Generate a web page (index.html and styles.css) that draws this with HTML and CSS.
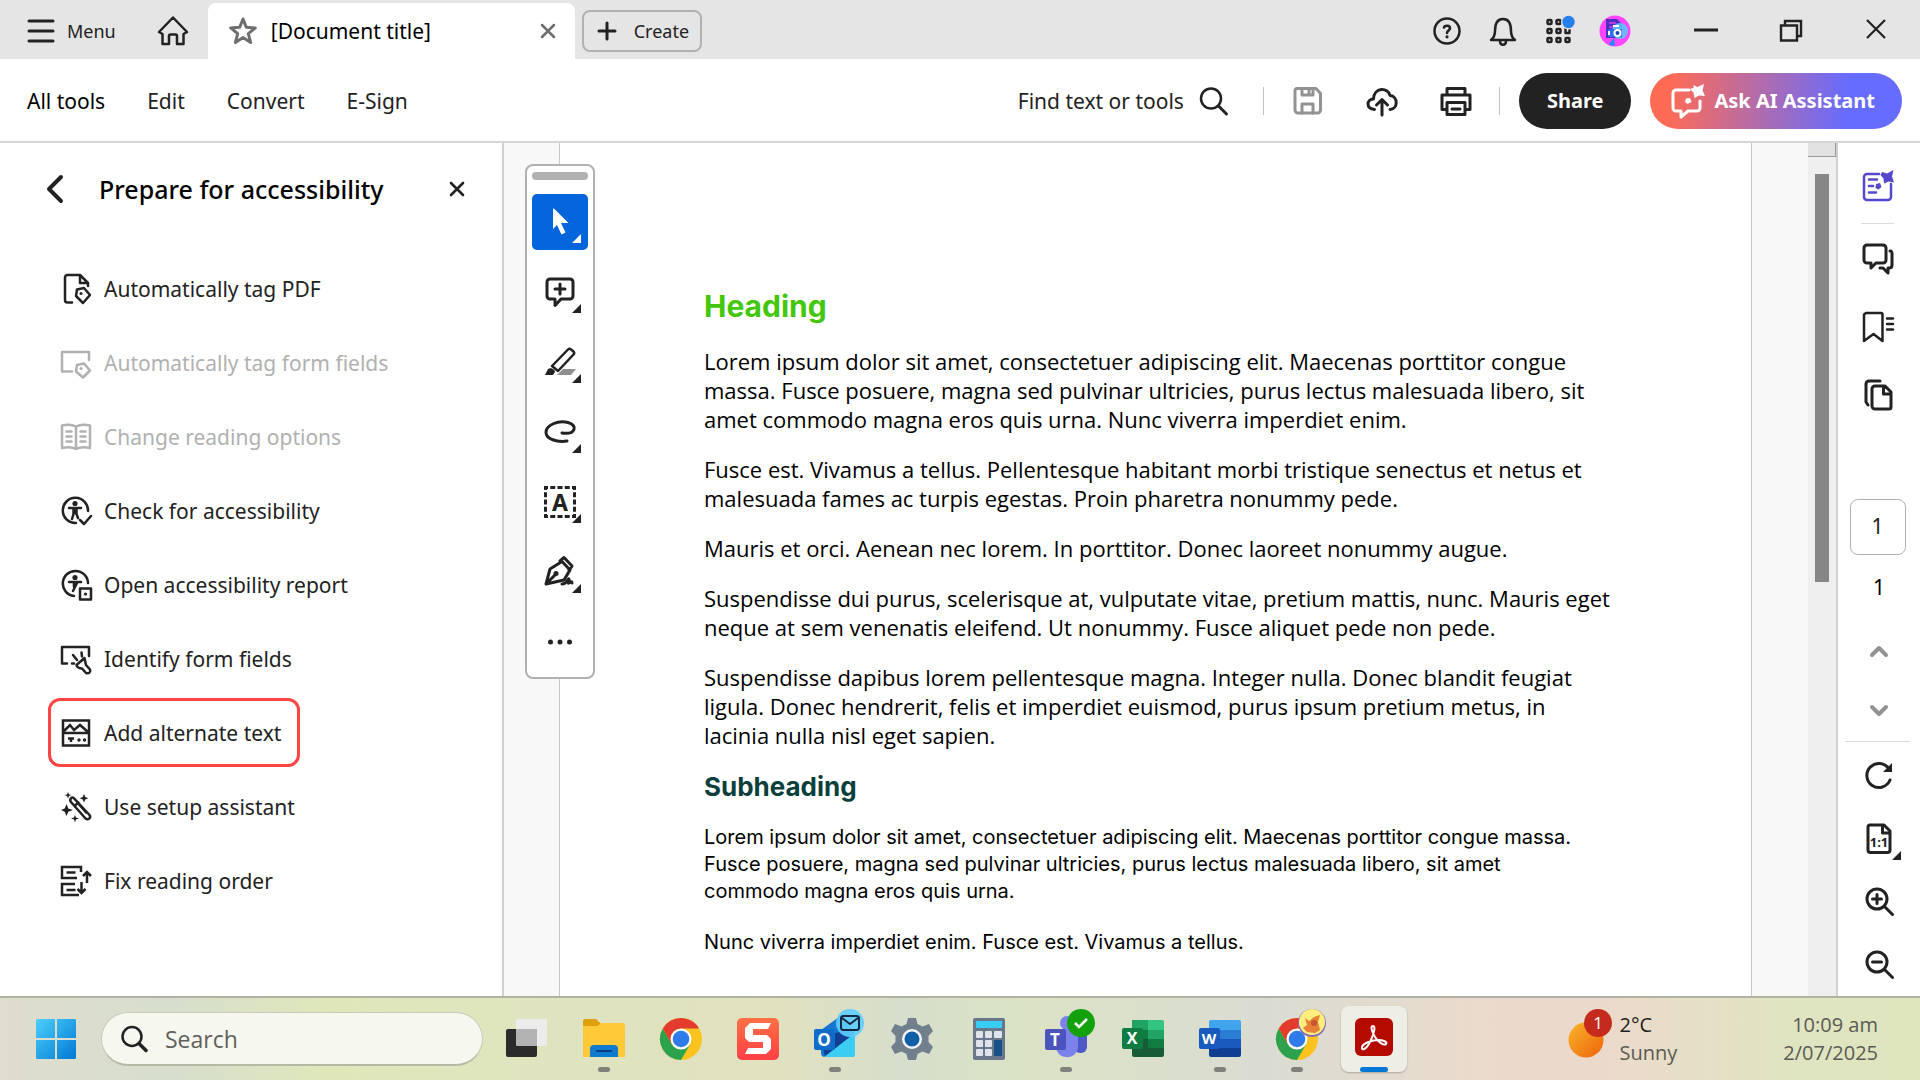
FILE: index.html
```html
<!DOCTYPE html>
<html lang="en">
<head>
<meta charset="utf-8">
<title>[Document title]</title>
<link rel="stylesheet" href="styles.css">
</head>
<body>
<header class="titlebar">
  <button class="menu-btn" type="button">
    <svg class="ic" width="26" height="26" viewBox="0 0 26 26"><path d="M1 3h24M1 13h24M1 23h24" stroke-width="3"/></svg>
    Menu
  </button>
  <button class="home-btn" type="button" aria-label="Home">
    <svg class="ic" width="32" height="32" viewBox="0 0 32 32"><path d="M16 2.500 30 17l-3.500 2V29H20V21a1.500 1.500 0 0 0-1.500-1.500h-5A1.500 1.500 0 0 0 12 21v8H5.500V19L2 17z"/></svg>
  </button>
  <div class="tab">
    <svg class="ic grey" width="30" height="30" viewBox="0 0 30 30"><path d="M15 3l3.300 8.300 9 .6-7 5.700 2.300 8.900L15 21.600l-7.600 4.900 2.300-8.900-7-5.700 9-.6z" stroke-width="3"/></svg>
    <span class="tab-title">[Document title]</span>
    <button type="button" aria-label="Close tab"><svg class="ic grey" width="16" height="16" viewBox="0 0 16 16"><path d="M2 2l12 12M14 2L2 14" stroke-width="2.500"/></svg></button>
  </div>
  <button class="create-btn" type="button">
    <svg class="ic" width="20" height="20" viewBox="0 0 20 20"><path d="M10 2v16M2 10h16" stroke-width="3"/></svg>
    Create
  </button>
  <div class="title-actions">
    <button type="button" aria-label="Help"><svg class="ic" width="32" height="32" viewBox="0 0 32 32"><circle cx="16" cy="16" r="12.500"/><path d="M13 12.500c.6-2.300 6-2.500 6 .8 0 2-3 2.300-3 4.700" stroke-width="2.600"/><circle class="dot" cx="16" cy="21.800" r="1.600"/></svg></button>
    <button type="button" aria-label="Notifications"><svg class="ic" width="32" height="32" viewBox="0 0 32 32"><path d="M4 25c2.500-2 4-5 4-9 0-7 1.500-12 8-12s8 5 8 12c0 4 1.500 7 4 9z"/><path d="M13 26c0 5 6 5 6 0"/></svg></button>
    <button type="button" aria-label="Apps"><svg class="ic" width="32" height="32" viewBox="0 0 32 32"><g><rect x="4.500" y="5" width="4" height="4" rx="1"/><rect x="13.500" y="5" width="4" height="4" rx="1"/><rect x="4.500" y="14" width="4" height="4" rx="1"/><rect x="13.500" y="14" width="4" height="4" rx="1"/><path d="M22.500 14v4h4v-3"/><rect x="4.500" y="23" width="4" height="4" rx="1"/><rect x="13.500" y="23" width="4" height="4" rx="1"/><rect x="22.500" y="23" width="4" height="4" rx="1"/></g><circle cx="25.500" cy="7" r="7.500" fill="#e5e5e5" stroke="none"/><circle cx="25.500" cy="7" r="6.200" fill="#2680eb" stroke="none"/></svg></button>
    <button type="button" aria-label="Account"><svg width="32" height="32" viewBox="0 0 32 32"><circle cx="16" cy="16" r="15.500" fill="#ff45ff"/><path d="M7 4h11l5 5v14H7z" fill="#4b2fbf"/><path d="M10 8h7M10 12h9M10 16h4" stroke="#e03df0" stroke-width="1.500"/><circle cx="21" cy="16" r="8" fill="#5cc3ff" opacity=".9"/><rect x="9" y="14" width="14" height="8" rx="1" fill="#2f6ff0"/><path d="M10 16v4M14 11h6" stroke="#fff" stroke-width="2"/><circle cx="18.500" cy="18" r="3" fill="#1c45c0" stroke="#fff" stroke-width="2"/><path d="M15 23l-5 6c2 2 4 2 6 1z" fill="#2188ff"/></svg></button>
  </div>
  <div class="window-actions">
    <button type="button" aria-label="Minimise"><svg class="ic sq" width="26" height="26" viewBox="0 0 26 26"><path d="M1 12h24" stroke-width="3"/></svg></button>
    <button type="button" aria-label="Restore"><svg class="ic sq" width="26" height="26" viewBox="0 0 26 26"><path d="M3 7.500h16v15H3z" stroke-width="2.400"/><path d="M7 7V3h16v15h-4" stroke-width="2.400"/></svg></button>
    <button type="button" aria-label="Close window"><svg class="ic sq" width="26" height="26" viewBox="0 0 26 26"><path d="M4 2l18 18M22 2L4 20" stroke-width="2.200"/></svg></button>
  </div>
</header>

<nav class="toolbar">
  <a class="current" href="#tools">All tools</a>
  <a href="#edit">Edit</a>
  <a href="#convert">Convert</a>
  <a href="#sign">E-Sign</a>
  <div class="toolbar-right">
    <button class="find-btn" type="button">Find text or tools
      <svg class="ic" width="32" height="32" viewBox="0 0 32 32"><circle cx="13" cy="13.500" r="10"/><path d="M20.500 21l8 8" stroke-width="3"/></svg>
    </button>
    <span class="vline"></span>
    <button type="button" aria-label="Save"><svg class="ic pale" width="32" height="32" viewBox="0 0 32 32"><path d="M5 3.500h19l4.500 5V25a3 3 0 0 1-3 3H6a3 3 0 0 1-3-3V5.500a2 2 0 0 1 2-2z" stroke-width="3"/><path d="M10 4v6h11V4M17 4v6M10 28v-9h11v9" stroke-width="3"/></svg></button>
    <button type="button" aria-label="Upload"><svg class="ic" width="32" height="32" viewBox="0 0 32 32"><path d="M8.500 24.500C-.5 24 .5 14 7.500 14 8 2 22 2 24 10.500c8 .5 8.500 13.500 0 14" stroke-width="3"/><path d="M16 30V15M10.500 20l5.500-5.500 5.500 5.500" stroke-width="3"/></svg></button>
    <button type="button" aria-label="Print"><svg class="ic" width="32" height="32" viewBox="0 0 32 32"><path d="M7 10V3.500h18V10M6 24.500H2V10h28v14.500h-4M7 17.500h18v12H7zM12 24h8" stroke-width="3"/></svg></button>
    <span class="vline"></span>
    <button class="share-btn" type="button">Share</button>
    <button class="ai-btn" type="button">
      <svg class="ic white" width="34" height="36" viewBox="0 0 34 36"><path d="M18 7H5a3 3 0 0 0-3 3v15a3 3 0 0 0 3 3h5v6l7-6h9a3 3 0 0 0 3-3v-7" stroke-width="3"/><path class="dot" d="M22 2l4.500 2L33 1l-1.500 6.500 2.500 5.500-6-.5-4.500 2.500-1-5.500L19 6l4-1.500zM15 15.500l4-.5 1.500 4-4 2-2.500-2z"/></svg>
      Ask AI Assistant
    </button>
  </div>
</nav>

<main class="work">
  <aside class="panel">
    <div class="panel-head">
      <button type="button" aria-label="Back"><svg class="ic" width="20" height="32" viewBox="0 0 20 32"><path d="M17 4L5 16l12 12" stroke-width="4"/></svg></button>
      <h1>Prepare for accessibility</h1>
      <button type="button" aria-label="Close panel"><svg class="ic" width="16" height="16" viewBox="0 0 16 16"><path d="M2 2l12 12M14 2L2 14" stroke-width="2.600"/></svg></button>
    </div>
    <ul class="tools">
      <li><button type="button"><svg class="ic" width="32" height="32" viewBox="0 0 32 32"><path d="M12 29.500H7.500a2.500 2.500 0 0 1-2.500-2.500V4.500A2.500 2.500 0 0 1 7.500 2H20l8 8v3M20 2v8h8"/><path d="M17 16.500l7-1.500 6 7-7 8-7-7z"/><circle class="dot" cx="21" cy="20.500" r="1.500"/></svg>Automatically tag PDF</button></li>
      <li><button type="button" disabled><svg class="ic" width="32" height="32" viewBox="0 0 32 32"><path d="M12 24.500H2V5h27v8"/><path d="M17 18l7-1.500 6 7-7 7-7-6z"/><circle class="dot" cx="21" cy="21.500" r="1.500"/></svg>Automatically tag form fields</button></li>
      <li><button type="button" disabled><svg class="ic" width="32" height="32" viewBox="0 0 32 32"><path d="M16 5.500C12 3.500 7 3.500 2 4.500V27c5-1 10-1 14 1 4-2 9-2 14-1V4.500c-5-1-10-1-14 1zM16 5.500V28M6.500 10.500h5M6.500 15.500h5M6.500 20.500h5M20.500 10.500h5M20.500 15.500h5M20.500 20.500h5"/></svg>Change reading options</button></li>
      <li><button type="button"><svg class="ic" width="32" height="32" viewBox="0 0 32 32"><path d="M16 28A12.600 12.600 0 1 1 28 16"/><circle class="dot" cx="15" cy="8.500" r="2.600"/><path d="M9 13h12M15 13v5M13.500 14v5L12 24M16.500 14v5l1.500 4M20 25l4 4 7-8"/></svg>Check for accessibility</button></li>
      <li><button type="button"><svg class="ic" width="32" height="32" viewBox="0 0 32 32"><path d="M14 27A12.600 12.600 0 1 1 28 14"/><circle class="dot" cx="15" cy="8.500" r="2.600"/><path d="M9 13h12M17 14l-4 8M14 14v4"/><path d="M20 19.500h11v11H20z"/><circle class="dot" cx="25.500" cy="25" r="1.600"/></svg>Open accessibility report</button></li>
      <li><button type="button"><svg class="ic" width="32" height="32" viewBox="0 0 32 32"><path d="M7 20.500H2V4h27v9M13 12l4 5M21.500 9.500l.5 4M12 20.500h2"/><path d="M24.500 15L16.500 22c0 2 3 3.500 5.500 3.500l4 4.500c3 1 5-1 4-3.500L26 22z"/></svg>Identify form fields</button></li>
      <li class="picked"><button type="button"><svg class="ic sq" width="32" height="32" viewBox="0 0 32 32"><path d="M3 3.500h26v25H3zM3 16h26M4 14l6-6 4 5 6-5 8 7"/><path d="M8 21.500h6M11 21.500V25"/><circle class="dot" cx="19" cy="23" r="1.700"/><circle class="dot" cx="24.500" cy="23" r="1.700"/></svg>Add alternate text</button></li>
      <li><button type="button"><svg class="ic" width="32" height="32" viewBox="0 0 32 32"><path d="M11 7.200c.8-.8 2-.8 2.800 0L29.500 24c2 3-1.500 5.500-4 3.500L11 11c-.8-1-.8-2.800 0-3.800zM15 14.500l3.500-3"/><path d="M19 14l7 8" stroke-width="1.500"/><path class="dot" d="M8 1l1 2.500 2.500.5L9 5l-1 2.500L7 5l-2.500-1L7 3.500zM24 3l1.300 3 3 1.300-3 1.200-1.300 3-1.300-3-3-1.200 3-1.300zM6.500 13l1.800 4.500L13 19l-4.700 1.700L6.500 25l-1.800-4.300L1 19l3.700-1.500zM15 24l1 2.500 3 1-3 1-1 3-1-3-3-1 3-1z"/></svg>Use setup assistant</button></li>
      <li><button type="button"><svg class="ic sq" width="32" height="32" viewBox="0 0 32 32"><path d="M17 13H2V2h19v5M6.500 7.500h9M15 19H2v11h17M6.500 25h9"/><path d="M27 18V7M23 11l4-4 4 4M21.500 17v11M17.500 24l4 4 4-4"/></svg>Fix reading order</button></li>
    </ul>
  </aside>

  <section class="canvas">
    <article class="page">
      <h2>Heading</h2>
      <p>Lorem ipsum dolor sit amet, consectetuer adipiscing elit. Maecenas porttitor congue<br>massa. Fusce posuere, magna sed pulvinar ultricies, purus lectus malesuada libero, sit<br>amet commodo magna eros quis urna. Nunc viverra imperdiet enim.</p>
      <p>Fusce est. Vivamus a tellus. Pellentesque habitant morbi tristique senectus et netus et<br>malesuada fames ac turpis egestas. Proin pharetra nonummy pede.</p>
      <p>Mauris et orci. Aenean nec lorem. In porttitor. Donec laoreet nonummy augue.</p>
      <p>Suspendisse dui purus, scelerisque at, vulputate vitae, pretium mattis, nunc. Mauris eget<br>neque at sem venenatis eleifend. Ut nonummy. Fusce aliquet pede non pede.</p>
      <p>Suspendisse dapibus lorem pellentesque magna. Integer nulla. Donec blandit feugiat<br>ligula. Donec hendrerit, felis et imperdiet euismod, purus ipsum pretium metus, in<br>lacinia nulla nisl eget sapien.</p>
      <h3>Subheading</h3>
      <p class="alt">Lorem ipsum dolor sit amet, consectetuer adipiscing elit. Maecenas porttitor congue massa.<br>Fusce posuere, magna sed pulvinar ultricies, purus lectus malesuada libero, sit amet<br>commodo magna eros quis urna.</p>
      <p class="alt">Nunc viverra imperdiet enim. Fusce est. Vivamus a tellus.</p>
    </article>
    <div class="scrollbar"><div class="split-box"></div><div class="thumb"></div></div>

    <div class="quick">
      <span class="grip"></span>
      <button class="on more" type="button" aria-label="Select"><svg width="32" height="32" viewBox="0 0 32 32"><path d="M9 3.500c0-1 .8-1.200 1.500-.6L24.500 17H17l4.500 9.500-4 2L13 19l-4 4z" fill="#fff"/></svg></button>
      <button class="more" type="button" aria-label="Comment"><svg class="ic" width="32" height="32" viewBox="0 0 32 32"><path d="M6 3h20a3 3 0 0 1 3 3v14a3 3 0 0 1-3 3H17l-6 6.500V23H6a3 3 0 0 1-3-3V6a3 3 0 0 1 3-3zM16 8v10M11 13h10" stroke-width="3"/></svg></button>
      <button class="more" type="button" aria-label="Highlight"><svg class="ic" width="32" height="32" viewBox="0 0 32 32"><path d="M8 20L24 3.500c1-1 2-1 3 0l2.500 2c1 1 1 2 0 3L14 25z"/><path d="M19 23h13l-5 6H13z" fill="#8f8f8f" stroke="none"/><path class="dot" d="M1 29l3-6c2-2 7 0 7 3l-2 3z"/></svg></button>
      <button class="more" type="button" aria-label="Draw"><svg class="ic" width="32" height="32" viewBox="0 0 32 32"><path d="M18 17c14 2 16-8 6-10.500C14 4 2 9 2 16.500 2 23 13 26.500 23 25" stroke-width="3"/></svg></button>
      <button class="more" type="button" aria-label="Select text box"><svg class="ic sq" width="34" height="34" viewBox="0 0 34 34"><rect x="2.500" y="2.500" width="29" height="29" stroke-width="3" stroke-dasharray="5 2.250" stroke-dashoffset="2.500"/><text x="17" y="25.500" text-anchor="middle" font-family="Noto Sans" font-size="23" font-weight="700" fill="#222" stroke="none">A</text></svg></button>
      <button class="more" type="button" aria-label="Sign"><svg class="ic" width="34" height="34" viewBox="0 0 34 34"><path d="M3 29L7 14l12-7.500L27 15l-6 10zM3 29l9-9" stroke-width="3"/><circle class="dot" cx="13" cy="18.500" r="2.500"/><path d="M17 6l4-3.500 8 8.500-3 4M19 29c5 0 6-6 7-5s-2 5 0 4 3-2 3 0" stroke-width="3"/></svg></button>
      <button type="button" aria-label="More tools"><svg class="ic" width="32" height="32" viewBox="0 0 32 32"><g class="dot"><circle cx="6.500" cy="16" r="2.500"/><circle cx="16" cy="16" r="2.500"/><circle cx="25.500" cy="16" r="2.500"/></g></svg></button>
    </div>
  </section>

  <aside class="rail">
    <button type="button" aria-label="Generative summary"><svg class="ic violet" width="32" height="32" viewBox="0 0 32 32"><path d="M17 4H5a3 3 0 0 0-3 3v20a3 3 0 0 0 3 3h21a3 3 0 0 0 3-3V14M7 9.500h8M7 16h4M7 22.500h7"/><path class="dot" d="M20 2l5 1.500L31.500 0 30 6.500l2 6-5.500-1-4.500 2-.5-5-3-3.500zM14 14l4-1 1.500 4-3 2.500-3-1.500z"/></svg></button>
    <span class="hline"></span>
    <button type="button" aria-label="Comments"><svg class="ic" width="32" height="32" viewBox="0 0 32 32"><path d="M5 2h16a3 3 0 0 1 3 3v12a3 3 0 0 1-3 3h-7l-5 5v-5H5a3 3 0 0 1-3-3V5a3 3 0 0 1 3-3zM28 8c2 0 2 1 2 3v11c0 2-1 3-3 3h-1v5l-5-5h-3" stroke-width="3"/></svg></button>
    <button type="button" aria-label="Bookmarks"><svg class="ic" width="32" height="32" viewBox="0 0 32 32"><path d="M4 2h15a1.500 1.500 0 0 1 1.500 1.500V30L11.500 23 2 30V3.500zM25 7.500h6M25 13h6M25 18.500h6"/></svg></button>
    <button type="button" aria-label="Pages"><svg class="ic" width="32" height="32" viewBox="0 0 32 32"><path d="M18 2H7a3 3 0 0 0-3 3v18l2 3M13 7h10l6 6v15a2 2 0 0 1-2 2H13a3 3 0 0 1-3-3V10a3 3 0 0 1 3-3zM21.500 7v8H29" stroke-width="3"/></svg></button>
    <input class="page-no" type="text" value="1" aria-label="Page number">
    <span class="page-count">1</span>
    <button class="step" type="button" aria-label="Previous page"><svg class="ic pale" width="20" height="20" viewBox="0 0 20 20"><path d="M3 14l7-7 7 7" stroke-width="4"/></svg></button>
    <button class="step" type="button" aria-label="Next page"><svg class="ic pale" width="20" height="20" viewBox="0 0 20 20"><path d="M3 6l7 7 7-7" stroke-width="4"/></svg></button>
    <span class="hline wide"></span>
    <div class="view-tools">
      <button type="button" aria-label="Rotate"><svg class="ic" width="32" height="32" viewBox="0 0 32 32"><path d="M27 20A12 12 0 1 1 26 9" stroke-width="3"/><path class="dot" d="M29 3v9h-9z"/></svg></button>
      <button class="more" type="button" aria-label="Actual size"><svg class="ic" width="32" height="32" viewBox="0 0 32 32"><path d="M7 2h14l6 6v19a2.500 2.500 0 0 1-2.500 2.500h-17A2.500 2.500 0 0 1 5 27V4a2 2 0 0 1 2-2zM19.500 2v8H27" stroke-width="3"/><text x="16" y="24" text-anchor="middle" font-family="Noto Sans" font-size="13" font-weight="700" fill="#222" stroke="none">1:1</text></svg></button>
      <button type="button" aria-label="Zoom in"><svg class="ic" width="32" height="32" viewBox="0 0 32 32"><circle cx="14" cy="13" r="10" stroke-width="3"/><path d="M21.500 20.500l8 8M9.500 13h9M14 8.500v9" stroke-width="3"/></svg></button>
      <button type="button" aria-label="Zoom out"><svg class="ic" width="32" height="32" viewBox="0 0 32 32"><circle cx="14" cy="13" r="10" stroke-width="3"/><path d="M21.500 20.500l8 8M9.500 13h9" stroke-width="3"/></svg></button>
    </div>
  </aside>
</main>

<footer class="taskbar">
  <button class="start" type="button" aria-label="Start"><svg width="40" height="40" viewBox="0 0 40 40"><defs><linearGradient id="win" x1="0" y1="0" x2="1" y2="1"><stop offset="0" stop-color="#4cd0fb"/><stop offset="1" stop-color="#0078d4"/></linearGradient></defs><path d="M1 0h18v19H0V1zM21 0h18l1 1v18H21zM0 21h19v19H1l-1-1zM21 21h19v18l-1 1H21z" fill="url(#win)"/></svg></button>
  <label class="search">
    <svg class="ic" width="28" height="28" viewBox="0 0 28 28"><circle cx="11" cy="11.500" r="9.500"/><path d="M18 18.500l7 7" stroke-width="3.500"/></svg>
    <input type="text" placeholder="Search" aria-label="Search">
  </label>
  <div class="apps">
    <button type="button" aria-label="Task view"><svg width="44" height="44" viewBox="0 0 44 44"><rect x="1" y="12" width="31" height="28" rx="2" fill="#2b2b2b"/><rect x="11" y="2" width="31" height="27" rx="2" fill="#ececec"/><path d="M11 12h21v17H13a2 2 0 0 1-2-2z" fill="#b3b3b3"/></svg></button>
    <button class="open" type="button" aria-label="File Explorer"><svg width="44" height="44" viewBox="0 0 44 44"><path d="M1 4a2 2 0 0 1 2-2h11l4 4v4H1z" fill="#dfa009"/><path d="M1 9h14l4-3h22a2 2 0 0 1 2 2v32H1z" fill="#ffc937"/><path d="M8 40V32a4 4 0 0 1 4-4h20a4 4 0 0 1 4 4v8z" fill="#0f7bd0"/><path d="M14 34h16" stroke="#063f82" stroke-width="2"/></svg></button>
    <button type="button" aria-label="Chrome"><svg width="44" height="44" viewBox="0 0 44 44"><g id="chrome"><circle cx="22" cy="22" r="21" fill="#fcc31e"/><path d="M3.800 11.500A21 21 0 0 0 22 43l9.100-15.800L12.900 27.200z" fill="#2ca24c"/><path d="M3.800 11.500A21 21 0 0 1 40.200 11.500H22L12.900 27.200z" fill="#e33b2e"/><circle cx="22" cy="22" r="10.500" fill="#fff"/><circle cx="22" cy="22" r="8.300" fill="#2f7bea"/></g></svg></button>
    <button type="button" aria-label="Snagit"><svg width="44" height="44" viewBox="0 0 44 44"><defs><linearGradient id="snag" x1="0" y1="0" x2="0" y2="1"><stop offset="0" stop-color="#ff7145"/><stop offset="1" stop-color="#ff3f45"/></linearGradient></defs><rect x="1" y="1" width="42" height="42" rx="5" fill="url(#snag)"/><path d="M35 6l-3 6H17v6h14l4 4v10l-5 5H9l3-6h15v-6H13l-4-4V11l5-5z" fill="#fff"/></svg></button>
    <button class="open" type="button" aria-label="Outlook"><svg width="56" height="56" viewBox="0 0 56 56"><path d="M14 19L32 6l16 14v22a4 4 0 0 1-4 4H18a4 4 0 0 1-4-4z" fill="#1477d1"/><path d="M14 25l34-7-12 28H18z" fill="#123f93"/><path d="M48 22v21a3 3 0 0 1-3 3H17l31-24z" fill="#3ccdf2"/><rect x="7" y="18" width="21" height="21" rx="2" fill="#0f6cc9"/><text x="17" y="35" text-anchor="middle" font-family="Open Sans" font-size="17" font-weight="700" fill="#fff">O</text><circle cx="43" cy="12" r="14" fill="#60cdff" opacity=".92"/><rect x="34" y="5" width="18" height="14" rx="2.500" fill="none" stroke="#14293f" stroke-width="2"/><path d="M35 7l8 6 8-6" fill="none" stroke="#14293f" stroke-width="2"/></svg></button>
    <button type="button" aria-label="Settings"><svg width="44" height="44" viewBox="0 0 44 44"><path d="M18 1h8l1.500 6 5 2.500L39 7l4 7-4.500 5v6l4.500 5-4 7-6.500-2.500-5 2.500L26 43h-8l-1.500-6-5-2.500L5 37l-4-7 4.500-5v-6L1 14l4-7 6.500 2.500 5-2.500z" fill="#72808e"/><circle cx="22" cy="22" r="10" fill="#f3f6f8"/><circle cx="22" cy="22" r="7.500" fill="#125fa9"/></svg></button>
    <button type="button" aria-label="Calculator"><svg width="44" height="44" viewBox="0 0 44 44"><rect x="6" y="1" width="32" height="42" rx="2" fill="#68788a"/><rect x="9" y="4" width="26" height="7" rx="1" fill="#38cdf5"/><g fill="#dfe5ea"><rect x="9" y="14" width="7" height="7" rx="1"/><rect x="18" y="14" width="7" height="7" rx="1"/><rect x="27" y="14" width="8" height="7" rx="1"/><rect x="9" y="23" width="7" height="7" rx="1"/><rect x="18" y="23" width="7" height="7" rx="1"/><rect x="9" y="32" width="7" height="7" rx="1"/><rect x="18" y="32" width="7" height="7" rx="1"/></g><rect x="27" y="23" width="8" height="16" rx="1" fill="#174f87"/></svg></button>
    <button class="open" type="button" aria-label="Teams"><svg width="56" height="56" viewBox="0 0 56 56"><circle cx="29" cy="12" r="7" fill="#7b83eb"/><rect x="36" y="18" width="13" height="24" rx="6" fill="#5059c9"/><path d="M18 18h22v17c0 15-22 15-22 0z" fill="#7b83eb"/><rect x="7" y="18" width="21" height="21" rx="2" fill="#4b53bc"/><text x="17" y="35" text-anchor="middle" font-family="Open Sans" font-size="17" font-weight="700" fill="#fff">T</text><circle cx="43" cy="12" r="14" fill="#13a10e"/><path d="M37 12l4 4 8-8" fill="none" stroke="#fff" stroke-width="2.500"/></svg></button>
    <button type="button" aria-label="Excel"><svg width="44" height="44" viewBox="0 0 44 44"><path d="M11 3h16v12H11z" fill="#21a366"/><path d="M27 3h14a2 2 0 0 1 2 2v8H27z" fill="#33c481"/><path d="M11 13h16v9H11z" fill="#107c41"/><path d="M27 13h16v9H27z" fill="#21a366"/><path d="M11 22h16v18H13a2 2 0 0 1-2-2z" fill="#185c37"/><path d="M27 22h16v9H27z" fill="#107c41"/><path d="M27 31h16v7a2 2 0 0 1-2 2H27z" fill="#185c37"/><rect x="1" y="11" width="21" height="21" rx="2" fill="#107c41"/><text x="11" y="27" text-anchor="middle" font-family="Open Sans" font-size="16" font-weight="700" fill="#fff">X</text></svg></button>
    <button class="open" type="button" aria-label="Word"><svg width="44" height="44" viewBox="0 0 44 44"><path d="M11 13V5a2 2 0 0 1 2-2h28a2 2 0 0 1 2 2v8z" fill="#41a5ee"/><path d="M11 13h32v9H11z" fill="#2b7cd3"/><path d="M11 22h32v9H11z" fill="#185abd"/><path d="M11 31h32v7a2 2 0 0 1-2 2H13a2 2 0 0 1-2-2z" fill="#103f91"/><rect x="1" y="11" width="21" height="21" rx="2" fill="#185abd"/><text x="11" y="27" text-anchor="middle" font-family="Open Sans" font-size="15" font-weight="700" fill="#fff">W</text></svg></button>
    <button class="open" type="button" aria-label="Chrome, second profile"><svg width="56" height="56" viewBox="0 0 56 56"><use href="#chrome" x="6" y="6"/><circle cx="43" cy="12" r="14" fill="#8e6bb5"/><circle cx="43" cy="11" r="13" fill="#fdee7d"/><path d="M36 7l4 3 5-4 6-2-2 7 2 8-5 3-8-1-4-4 4-3z" fill="#e8803a"/><circle cx="45" cy="12" r="3" fill="#c4562b"/></svg></button>
    <button class="active" type="button" aria-label="Acrobat"><svg width="44" height="44" viewBox="0 0 44 44"><rect x="3" y="1" width="38" height="38" rx="6" fill="#b30b00"/><path d="M21 9c-3 0-1 6 2 11s9 9 11 7-3-4-8-4-15 3-16 7 4 3 8-5 6-16 3-16z" fill="none" stroke="#fff" stroke-width="2"/></svg></button>
  </div>
  <div class="weather">
    <svg width="44" height="50" viewBox="0 0 44 50"><defs><linearGradient id="sun" x1="0" y1="0" x2="1" y2="1"><stop offset="0" stop-color="#f9b52c"/><stop offset="1" stop-color="#ee6209"/></linearGradient></defs><circle cx="18" cy="26" r="17.500" fill="url(#sun)"/><circle cx="30" cy="9" r="14" fill="#c42b1c"/><text x="30" y="15" text-anchor="middle" font-family="Open Sans" font-size="17" fill="#fff">1</text></svg>
    <div><b>2°C</b><br>Sunny</div>
  </div>
  <div class="clock">10:09 am<br>2/07/2025</div>
</footer>
</body>
</html>
```
FILE: styles.css
```css
* { box-sizing: border-box; }
body {
  margin: 0;
  min-height: 100vh;
  display: flex;
  flex-direction: column;
  background: #fff;
  color: #222;
  font: 21px/28px "Noto Sans", "Open Sans", sans-serif;
}
button, input { font: inherit; color: inherit; }
button { display: flex; align-items: center; margin: 0; padding: 0; border: 0; background: none; white-space: nowrap; }
a { color: inherit; text-decoration: none; }
svg { display: block; flex: none; overflow: visible; }
h1, h2, h3, p, ul { margin: 0; padding: 0; }

/* line icons */
.ic { fill: none; stroke: currentColor; stroke-width: 2.5px; stroke-linecap: round; stroke-linejoin: round; }
.sq { stroke-linecap: butt; stroke-linejoin: miter; }
.dot { fill: currentColor; stroke: none; }
.grey { color: #6e6e6e; }
.pale { color: #929292; }
.white { color: #fff; }
.violet { color: #5448cc; }

/* title bar */
.titlebar { display: flex; align-items: center; height: 59px; padding: 2px 31px 0 28px; background: #e5e5e5; }
.menu-btn { gap: 13px; font-size: 18px; }
.home-btn { margin: 0 19px 0 41px; }
.tab { display: flex; align-items: center; gap: 13px; align-self: flex-end; width: 367px; height: 56px; padding: 0 19px 0 20px; border-radius: 8px 8px 0 0; background: #fff; color: #000; }
.tab-title { flex: 1; }
.create-btn { gap: 17px; height: 42px; margin-left: 7px; padding: 0 11px 0 13px; border: 2px solid #b1b1b1; border-radius: 8px; font-size: 18px; }
.title-actions { display: flex; gap: 24px; margin-left: auto; margin-right: 62px; }
.window-actions { display: flex; gap: 59px; }

/* main toolbar */
.toolbar { display: flex; align-items: center; gap: 42px; height: 84px; padding: 2px 18px 0 27px; border-bottom: 2px solid #d5d7d5; }
.current { color: #000; }
.toolbar-right { display: flex; align-items: center; margin-left: auto; gap: 19px; }
.toolbar-right > button + button { margin-left: 23px; }
.find-btn { gap: 14px; margin-right: 14px; }
.vline { width: 1px; height: 28px; margin-right: 9px; background: #c4c4c4; }
.vline ~ .vline { margin: 0 0 0 8px; }
.toolbar-right .share-btn { height: 56px; padding: 0 28px; border-radius: 28px; background: #222; color: #fff; font-weight: 700; font-size: 20px; }
.toolbar-right .share-btn + .ai-btn { margin-left: 0; }
.ai-btn { gap: 9px; height: 56px; padding: 0 27px 0 21px; border-radius: 28px; background: linear-gradient(95deg, #ff6b55 8%, #666cff 78%); color: #fff; font-weight: 700; font-size: 20px; }

/* work area */
.work { flex: 1; display: flex; }
.panel { flex: none; width: 504px; border-right: 2px solid #d0d0d0; }
.panel-head { display: flex; align-items: center; height: 92px; padding: 0 37px 0 44px; }
.panel-head h1 { flex: 1; margin-left: 35px; color: #000; font-size: 25px; font-weight: 500; }
.tools { display: flex; flex-direction: column; align-items: flex-start; gap: 5px; padding: 19px 0 0 48px; list-style: none; }
.tools li { border: 3px solid transparent; border-radius: 12px; }
.tools button { gap: 12px; height: 63px; padding: 0 16px 0 9px; }
.tools button:disabled { color: #b1b1b1; }
.tools .picked { border-color: #ff4545; }

/* document */
.canvas { position: relative; flex: 1; display: flex; background: #f8f8f8; }
.page { flex: 1; margin: 0 56px 0 55px; padding: 143px 0 40px 144px; border: solid #c8c8c8; border-width: 0 1px; background: #fff; color: #000; white-space: nowrap; font: 22px/29px "Open Sans", sans-serif; }
.page h2 { color: #43c70b; font: 700 30px/40px Inter, sans-serif; }
.page h3 { margin-top: 20px; color: #0b3f3c; font: 700 26px/34px Inter, sans-serif; }
.page p { margin-top: 21px; }
.page h3 + p { margin-top: 20px; }
.page .alt { font: 20px/27px Inter, sans-serif; }
.page .alt + .alt { margin-top: 24px; }
.scrollbar { width: 30px; border: solid #d0d0d0; border-width: 0 2px 0 0; background: #efefef; }
.split-box { height: 14px; border: solid #9b9b9b; border-width: 0 1px 1px 0; background: #e1e1e1; }
.thumb { width: 14px; height: 408px; margin: 17px 0 0 7px; background: #868686; }

.quick { position: absolute; top: 21px; left: 21px; display: flex; flex-direction: column; align-items: center; gap: 14px; width: 70px; padding: 6px 0 7px; border: 2px solid #b1b1b1; border-radius: 8px; background: #fff; }
.grip { width: 56px; height: 8px; border-radius: 4px; background: #b1b1b1; }
.quick button { position: relative; justify-content: center; width: 56px; height: 56px; border-radius: 5px; color: #222; }
.quick .on { background: #0265dc; color: #fff; }
.more::after { content: ""; position: absolute; right: 7px; bottom: 7px; width: 9px; height: 9px; background: currentColor; clip-path: polygon(100% 0, 100% 100%, 0 100%); }

/* right rail */
.rail { flex: none; display: flex; flex-direction: column; align-items: center; width: 82px; padding: 27px 3px 0 0; }
.rail > button + button { margin-top: 36px; }
.rail .hline + button { margin-top: 19px; }
.hline { flex: none; width: 33px; height: 1px; margin-top: 21px; background: #dcdcdc; }
.page-no { width: 56px; height: 56px; margin-top: 88px; padding: 0 0 2px; border: 1px solid #b1b1b1; border-radius: 8px; background: #fff; text-align: center; }
.page-count { margin: 18px 0 40px; padding-left: 3px; color: #000; }
.rail .step { margin-left: 3px; }
.rail .step + .step { margin-top: 40px; }
.hline.wide { width: 65px; margin-top: 20px; }
.view-tools { display: flex; flex-direction: column; gap: 31px; padding: 18px 0 0 3px; }
.view-tools button { position: relative; }
.view-tools .more::after { right: -6px; bottom: -5px; }

/* taskbar */
.taskbar { display: flex; align-items: center; height: 84px; padding: 0 42px 0 36px; border-top: 2px solid #b0b3a3; background: linear-gradient(90deg, #dfddcd, #d7dece 9%, #dfe7ba 17%, #dfe3c0 32%, #e1e1be 40%, #d6decc 47%, #dbe3c5 53%, #dadcd2 66%, #ebdacb 78%, #ebdacb 84%, #dee5c0 94%, #dfe5bd); }
.search { display: flex; align-items: center; gap: 16px; width: 382px; height: 54px; margin: 0 11px 0 25px; padding: 0 19px; border: 1px solid #c9cbb8; border-bottom: 2px solid #b5b8a3; border-radius: 27px; background: #f6f7ee; }
.search input { min-width: 0; flex: 1; padding: 0; border: 0; outline: 0; background: none; font: 23px/30px "Open Sans", sans-serif; }
.search input::placeholder { color: #5f5f5c; opacity: 1; }
.apps { display: flex; gap: 11px; }
.apps button { position: relative; justify-content: center; width: 66px; height: 66px; border-radius: 8px; }
.apps .active { background: #eeeee6; box-shadow: 0 1px 2px #aaa89a; }
.open::after, .active::after { content: ""; position: absolute; bottom: 0; left: 50%; width: 12px; height: 5px; border-radius: 3px; background: #80817a; translate: -50%; }
.apps .active::after { width: 28px; background: #0078d4; }
.weather { display: flex; align-items: center; gap: 7px; margin-left: auto; }
.weather, .clock { color: #5b5a55; font: 20px/28px "Open Sans", sans-serif; }
.weather b { color: #1f1f1f; font-weight: 400; }
.clock { margin-left: 106px; text-align: right; }
```
